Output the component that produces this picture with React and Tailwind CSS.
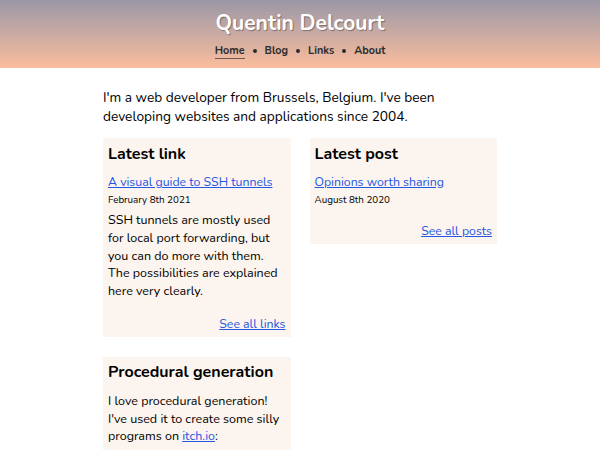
import React from "react";

const font = { fontFamily: "Nunito, Lato, 'Noto Sans', sans-serif" };

function Card({ title, children, top = "pt-[4px]" }) {
  return (
    <div className={"bg-[#fcf4ee] px-[5px] pb-[4px] " + top}>
      <h2 className="text-[16px] font-bold text-black leading-[24px]">{title}</h2>
      {children}
    </div>
  );
}

function Dot() {
  return <span className="w-[4px] h-[4px] rounded-full bg-[#2b2b2b]" />;
}

export default function App() {
  return (
    <div className="min-h-[450px] bg-white text-black" style={font}>
      <header className="h-[68px] bg-gradient-to-b from-[#9a97a6] to-[#fbbd9c] flex flex-col items-center pt-[10px]">
        <h1 className="text-[21px] font-bold text-white leading-[26px] [text-shadow:1px_1px_1px_rgba(0,0,0,0.35)]">
          Quentin Delcourt
        </h1>
        <nav className="flex items-center gap-[8px] mt-[7px] text-[10.8px] font-bold text-[#2b2b2b] leading-[14px]">
          <span className="border-b border-[#6b5a55] mt-[1px]">Home</span>
          <Dot />
          <span>Blog</span>
          <Dot />
          <span>Links</span>
          <Dot />
          <span>About</span>
        </nav>
      </header>
      <main className="w-[394px] mx-auto pt-[20px]">
        <p className="text-[13.7px] leading-[19px]">
          I'm a web developer from Brussels, Belgium. I've been developing websites and applications since 2004.
        </p>
        <div className="grid grid-cols-2 gap-x-[19px] gap-y-[20px] mt-[12px] items-start">
          <Card title="Latest link">
            <a href="#" className="block mt-[7px] text-[12.3px] leading-[18px] text-[#2357e4] underline">A visual guide to SSH tunnels</a>
            <div className="text-[9.8px] leading-[18px]">February 8th 2021</div>
            <p className="text-[12.5px] leading-[17.75px] mt-[2px] whitespace-nowrap">
              SSH tunnels are mostly used<br />
              for local port forwarding, but<br />
              you can do more with them.<br />
              The possibilities are explained<br />
              here very clearly.
            </p>
            <div className="text-right mt-[14px] leading-[18px]">
              <a href="#" className="text-[12.3px] leading-[18px] text-[#2357e4] underline">See all links</a>
            </div>
          </Card>
          <Card title="Latest post">
            <a href="#" className="block mt-[7px] text-[12.3px] leading-[18px] text-[#2357e4] underline">Opinions worth sharing</a>
            <div className="text-[9.8px] leading-[18px]">August 8th 2020</div>
            <div className="text-right mt-[12px] leading-[18px]">
              <a href="#" className="text-[12.3px] leading-[18px] text-[#2357e4] underline">See all posts</a>
            </div>
          </Card>
          <Card title="Procedural generation" top="pt-[3px]">
            <p className="text-[12.5px] leading-[17.75px] mt-[8px]">
              I love procedural generation! I've used it to create some silly programs on{" "}
              <a href="#" className="text-[#2357e4] underline">itch.io</a>:
            </p>
            <div className="h-[20px]" />
          </Card>
        </div>
      </main>
    </div>
  );
}
